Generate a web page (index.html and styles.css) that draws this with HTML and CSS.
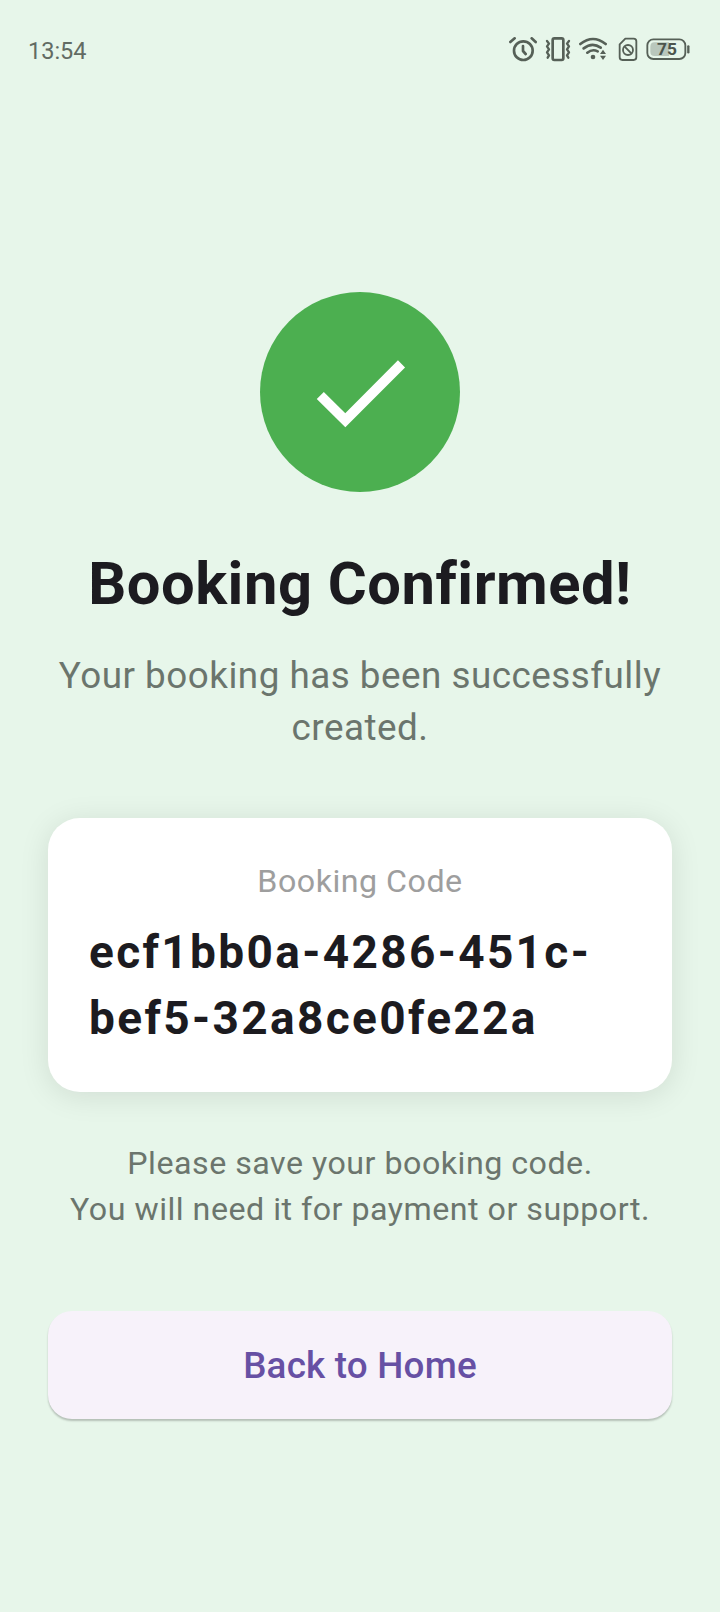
FILE: index.html
```html
<!DOCTYPE html>
<html lang="en">
<head>
<meta charset="utf-8">
<title>Booking Confirmed</title>
<link rel="stylesheet" href="styles.css">
</head>
<body>
<header class="status">
  <span class="time">13:54</span>
  <div class="icons">
    <svg class="icon" width="28" height="25" viewBox="27 27 84 75"><circle cx="70" cy="68" r="28"/><path d="M69 54V69L77 78M31 42L44 31M95 31L107 42"/></svg>
    <svg class="icon" width="26" height="25" viewBox="135 27 78 75"><rect x="158" y="31" width="32" height="65" rx="5"/><path class="wave" d="M141 39L147 47L141 55L147 64L141 73L147 82L143 89M207 39L201 47L207 55L201 64L207 73L201 82L205 89"/></svg>
    <svg class="icon icon-wifi" width="28" height="25" viewBox="237 27 84 75"><path d="M241 48Q279 18 317 48M251 61Q277 41 302 59M262 74Q277 62 293 70"/><circle class="solid" cx="279" cy="87" r="7"/><path class="solid" d="M309 65L318 78H300ZM300 83H318L309 96Z"/></svg>
    <svg class="icon thin" width="20" height="25" viewBox="54 27 60 75"><path d="M76 32H101Q109 32 109 40V88Q109 96 101 96H67Q59 96 59 88V49Z"/><circle cx="84" cy="66" r="15"/><path d="M74 56L94 76"/></svg>
    <svg class="icon thin" width="46" height="25" viewBox="138 27 138 75"><path class="charge" d="M164 43H207V84H164Q151 84 151 71V56Q151 43 164 43Z"/><rect x="142" y="34" width="114" height="59" rx="18"/><path class="nub" d="M265 55V73"/><text x="201" y="82" text-anchor="middle">75</text></svg>
  </div>
</header>
<main class="content">
  <svg class="success" width="200" height="200" viewBox="0 0 200 200"><circle cx="100" cy="100" r="100" fill="#4caf50"/><path d="M60.300 103.500L85.300 128.300L141.500 71.900" fill="none" stroke="#fff" stroke-width="10"/></svg>
  <h1 class="title">Booking Confirmed!</h1>
  <p class="subtitle">Your booking has been successfully<br>created.</p>
  <section class="card">
    <p class="label">Booking Code</p>
    <p class="code">ecf1bb0a-4286-451c-<br>bef5-32a8ce0fe22a</p>
  </section>
  <p class="note">Please save your booking code.<br>You will need it for payment or support.</p>
  <button class="home">Back to Home</button>
</main>
</body>
</html>
```
FILE: styles.css
```css
* { box-sizing: border-box; }
body { margin: 0; width: 720px; height: 1612px; background: #e7f6ea; font-family: Roboto, sans-serif; color: #1c1b20; overflow: hidden; }
h1, p { margin: 0; white-space: nowrap; }

.status { height: 99px; padding: 0 28px; display: flex; align-items: center; justify-content: space-between; }
.time { padding-top: 3px; font-size: 23.5px; color: #626b63; }
.icons { display: flex; align-items: center; gap: 8px; }
.icon { display: block; fill: none; stroke: #566057; stroke-width: 8; stroke-linecap: round; stroke-linejoin: round; }
.icon-wifi { margin-right: 3px; }
.thin { stroke-width: 5.5; }
.wave { stroke-width: 7; }
.solid { fill: #566057; stroke: none; }
.charge { fill: #b9c7bc; stroke: none; }
.nub { stroke-width: 7; }
.icon text { font: 700 52px Roboto, sans-serif; fill: #4c554d; stroke: none; }

.content { padding: 193px 48px 0; display: flex; flex-direction: column; align-items: center; }
.success { display: block; }
.title { margin-top: 50px; font-size: 59.7px; line-height: 85.5px; font-weight: 700; letter-spacing: .5px; }
.subtitle { margin-top: 22px; font-size: 36.8px; line-height: 52.5px; letter-spacing: .5px; text-align: center; color: #6b756d; }
.card { margin-top: 63px; width: 624px; height: 274px; padding: 40px; border-radius: 32px; background: #fff; box-shadow: 0 4px 30px rgb(0 0 0 / 10%); }
.label { font-size: 32.2px; line-height: 46px; text-align: center; letter-spacing: .5px; color: #9e9e9e; }
.code { margin: 15.5px 0 0 1px; font-size: 46px; line-height: 66px; font-weight: 700; letter-spacing: 2.35px; }
.note { margin-top: 48px; font-size: 32.2px; line-height: 46px; letter-spacing: .5px; text-align: center; color: #6b756d; }
.home { margin-top: 79.5px; width: 624px; height: 108px; padding: 0; border: 0; border-radius: 24px; background: #f7f2fa; color: #6750a4; font: 500 36.8px Roboto, sans-serif; letter-spacing: .2px; box-shadow: 0 2px 2px rgb(0 0 0 / 22%); }
```
